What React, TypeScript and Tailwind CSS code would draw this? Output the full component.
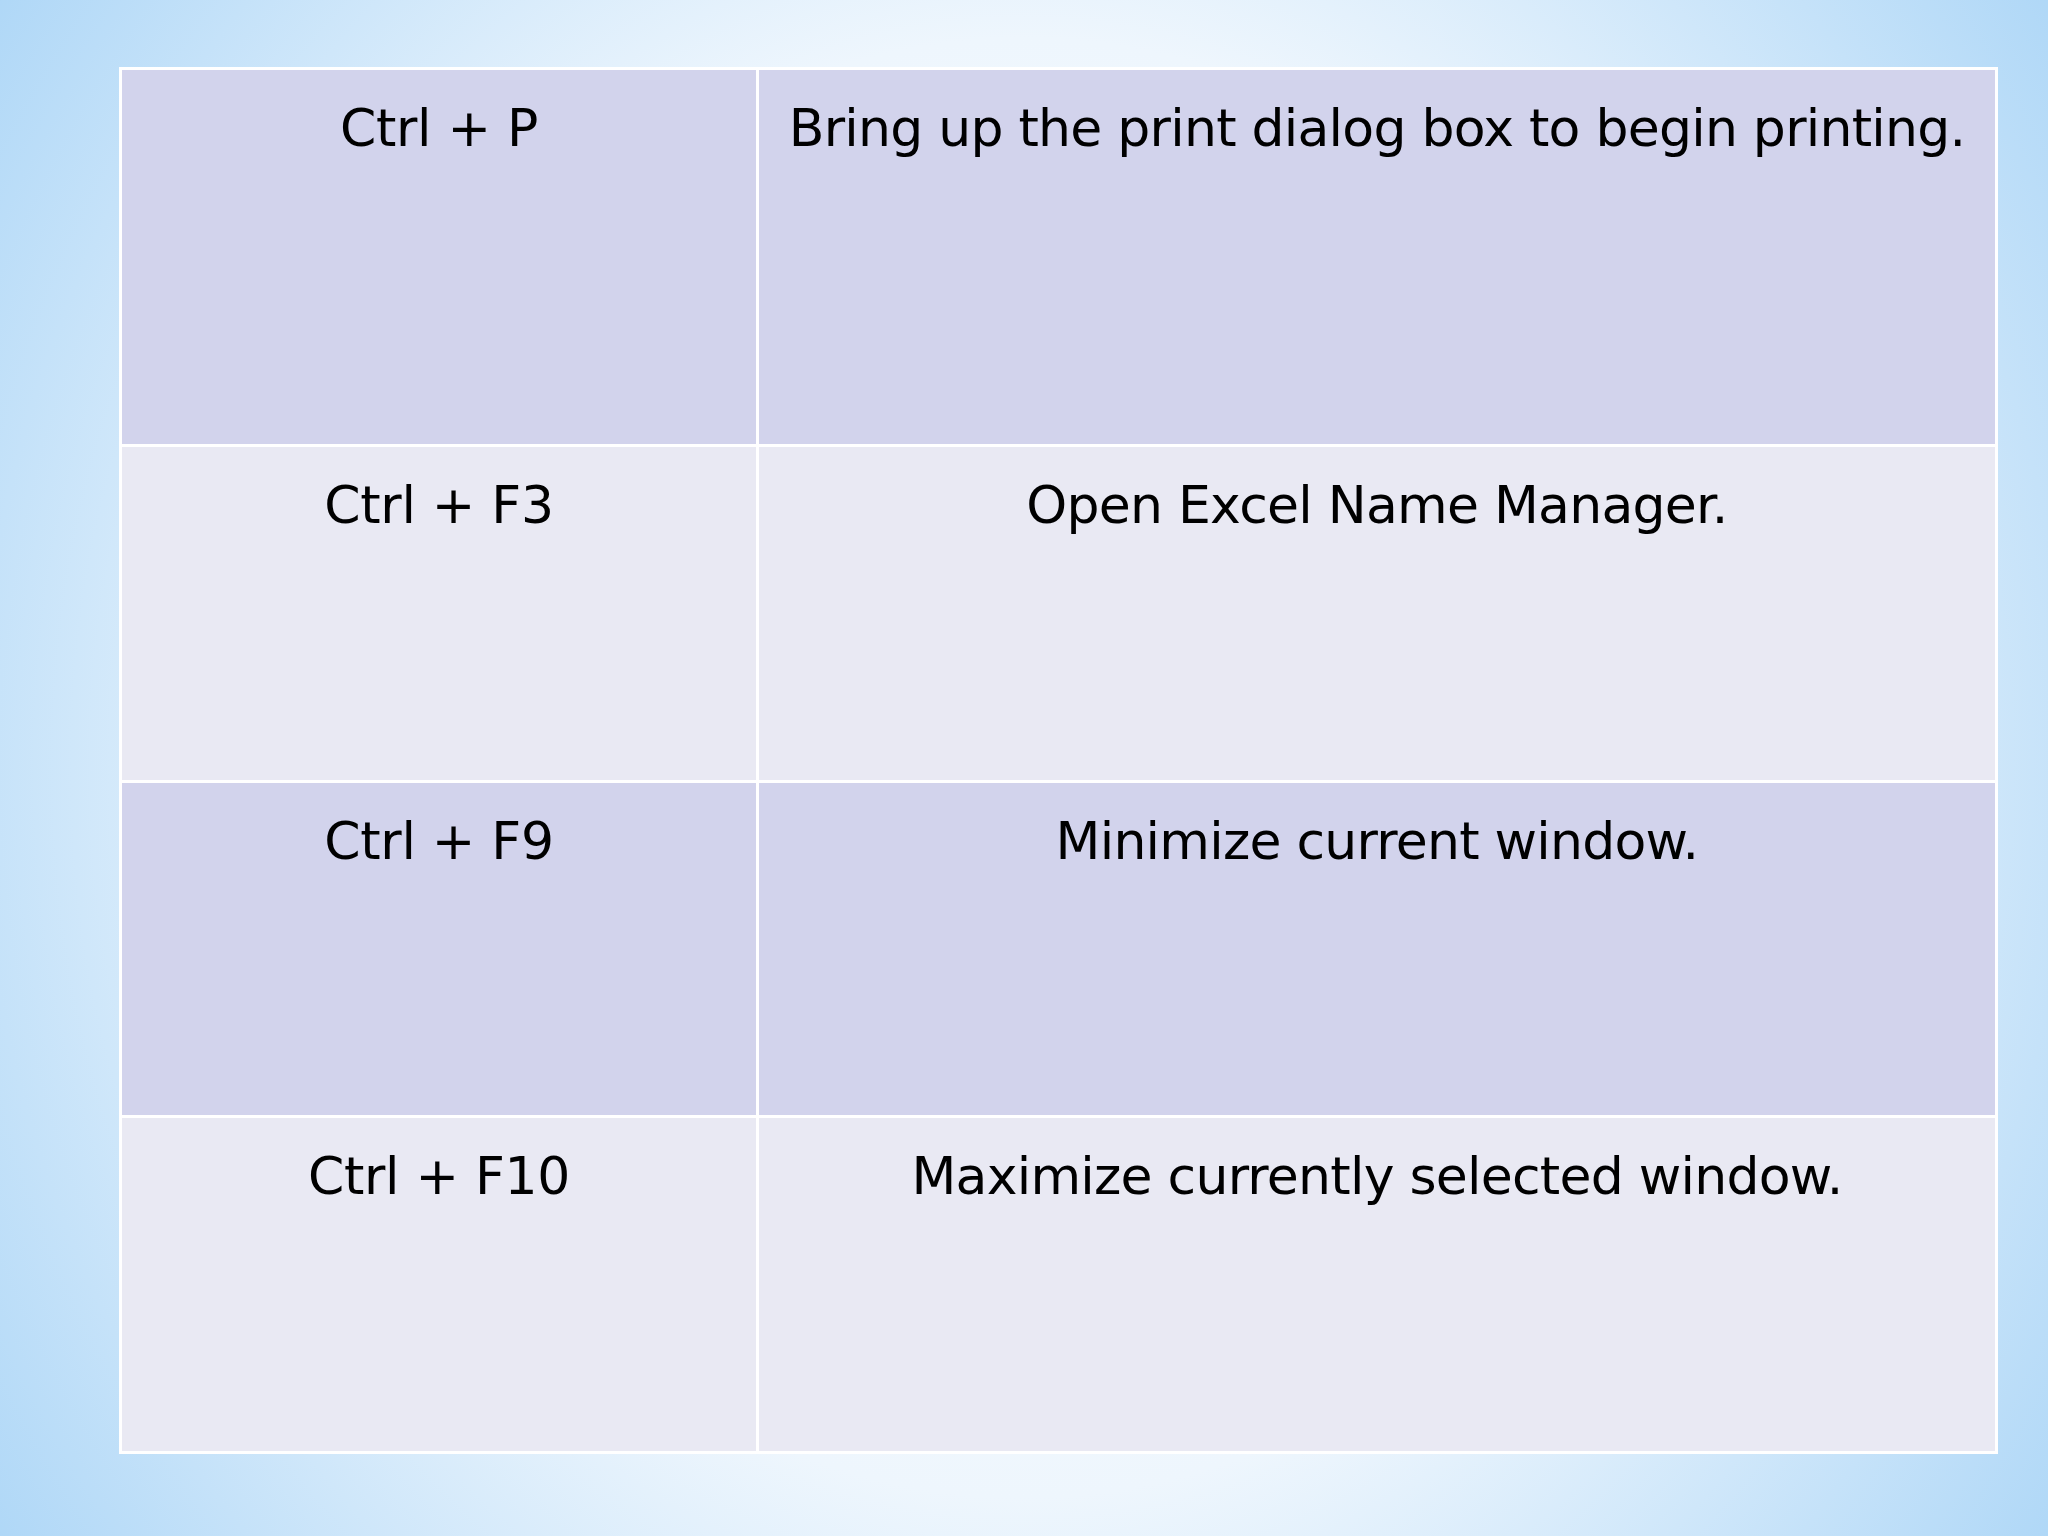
const rows = [
  { key: "Ctrl + P", desc: "Bring up the print dialog box to begin printing.", h: "h-[377px]", bg: "bg-[#d2d3ec]" },
  { key: "Ctrl + F3", desc: "Open Excel Name Manager.", h: "h-[336px]", bg: "bg-[#e9e9f3]" },
  { key: "Ctrl + F9", desc: "Minimize current window.", h: "h-[335px]", bg: "bg-[#d2d3ec]" },
  { key: "Ctrl + F10", desc: "Maximize currently selected window.", h: "h-[336px]", bg: "bg-[#e9e9f3]" },
]

const App = () => {
  return (
    <div className="w-[2048px] h-[1536px] overflow-hidden bg-[radial-gradient(ellipse_65%_95%_at_50%_50%,#ffffff_0%,#eef6fd_50%,#a6d3f6_100%)] pt-[67px] pl-[119px] font-['DejaVu_Sans',sans-serif] text-black">
      <table className="w-[1879px] border-collapse border-[3px] border-white table-fixed">
        <colgroup>
          <col className="w-[637px]" />
          <col />
        </colgroup>
        <tbody>
          {rows.map((row) => (
            <tr key={row.key} className={`${row.h} ${row.bg}`}>
              <td className="border-[3px] border-white align-top text-center text-[52px] leading-none tracking-[-0.3px] pt-[32px] whitespace-nowrap">
                {row.key}
              </td>
              <td className="border-[3px] border-white align-top text-center text-[52px] leading-none tracking-[-0.75px] pt-[32px] whitespace-nowrap">
                {row.desc}
              </td>
            </tr>
          ))}
        </tbody>
      </table>
    </div>
  )
}

export default App
